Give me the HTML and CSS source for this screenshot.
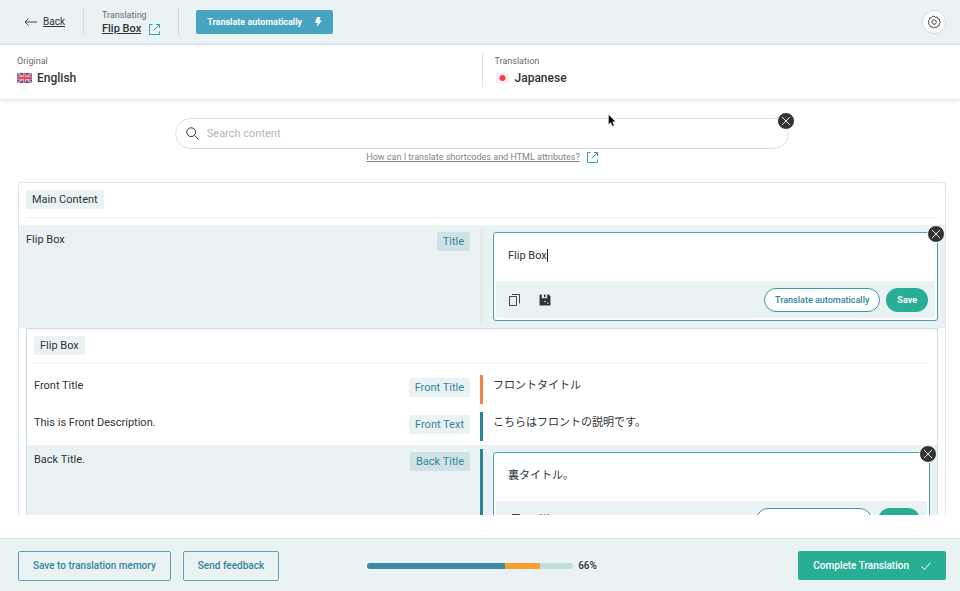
FILE: index.html
```html
<!DOCTYPE html>
<html lang="en">
<head>
<meta charset="utf-8">
<title>Translation Editor</title>
<link rel="stylesheet" href="styles.css">
</head>
<body>
<svg class="defs" aria-hidden="true">
  <symbol id="i-external" viewBox="0 0 11 11"><path d="M3.500 .5H.5V10.500H10.500V7.500M7 .5H10.500V4M10.300 .7L5 6" fill="none" stroke="currentColor"/></symbol>
  <symbol id="i-close" viewBox="0 0 10 10"><path d="M1 1L9 9M9 1L1 9" fill="none" stroke="currentColor" stroke-width=".9"/></symbol>
  <symbol id="i-copy" viewBox="0 0 12 12"><path d="M.5 2.500H7.500V11.500H.5ZM3 .5H10.500V9.500" fill="none" stroke="currentColor" stroke-width=".9"/></symbol>
  <symbol id="i-disk" viewBox="0 0 11 11"><path d="M1 .5H2.500V4H7.500V.5H9L10.500 2V10.500H.5V1Z" fill="currentColor"/><path d="M4.500 .5H6V3H4.500Z" fill="currentColor"/><path d="M4.800 7H6.300M8 7.500V9" stroke="#eaf2f4" stroke-width=".9" fill="none"/></symbol>
</svg>

<header class="topbar">
  <a class="back" href="#"><svg class="arrow" viewBox="0 0 13 8"><path d="M13 4H1M4.500 .5L1 4L4.500 7.500" fill="none" stroke="currentColor" stroke-width=".9"/></svg><span>Back</span></a>
  <div class="job">
    <span class="caption">Translating</span>
    <a class="job-link" href="#"><span>Flip Box</span><svg class="ext"><use href="#i-external"/></svg></a>
  </div>
  <button class="btn-auto" type="button">Translate automatically<svg class="bolt" viewBox="0 0 8 10"><path d="M3 0H6.500L5.300 3.500H7.800L2.800 10L3.700 5.800H1Z" fill="currentColor"/></svg></button>
  <button class="gear" type="button" aria-label="Settings"><svg viewBox="0 0 14 14"><path d="M7 1.2L8.500 2.300L10.300 2L11 3.600L12.700 4.400L12.400 6.100L13.300 7.500L12.200 8.900L12.200 10.600L10.500 11.100L9.600 12.600L7.900 12.200L6.400 13L5.100 11.800L3.300 11.800L2.900 10.100L1.500 9.100L2 7.400L1.200 5.900L2.500 4.700L2.700 3L4.400 2.700L5.500 1.300Z" fill="none" stroke="currentColor" stroke-width=".9"/><circle cx="7.100" cy="7.100" r="2.200" fill="none" stroke="currentColor" stroke-width=".9"/></svg></button>
</header>

<section class="languages">
  <div class="language">
    <span class="caption">Original</span>
    <strong><svg class="flag" viewBox="0 0 15 10"><path d="M0 0H15V10H0Z" fill="#3f559f"/><path d="M0 0L15 10M15 0L0 10" stroke="#f4eef2" stroke-width="1.800"/><path d="M0 0L15 10M15 0L0 10" stroke="#e0485c" stroke-width=".9"/><path d="M7.500 0V10M0 5H15" stroke="#f4dfe6" stroke-width="2.800"/><path d="M7.500 0V10M0 5H15" stroke="#f0465a" stroke-width="1.800"/></svg>English</strong>
  </div>
  <div class="language target">
    <span class="caption">Translation</span>
    <strong><svg class="flag" viewBox="0 0 15 10"><path d="M1 0H14V10H1Z" fill="#f1f0f1"/><circle cx="7.500" cy="5" r="3" fill="#fb3b4b"/></svg>Japanese</strong>
  </div>
</section>

<main class="content">
  <div class="search-area">
    <div class="search">
      <svg class="lens" viewBox="0 0 13 13"><circle cx="5.200" cy="5.200" r="4.400" fill="none" stroke="currentColor"/><path d="M8.400 8.400L12.500 12.500" stroke="currentColor"/></svg>
      <input type="text" aria-label="Search content" placeholder="Search content">
      <button class="close" type="button" aria-label="Clear search"><svg><use href="#i-close"/></svg></button>
    </div>
    <a class="help" href="#"><span>How can I translate shortcodes and HTML attributes?</span><svg class="ext"><use href="#i-external"/></svg></a>
  </div>

  <div class="group">
    <div class="group-head"><h2 class="chip">Main Content</h2></div>
    <div class="row active">
      <div class="source"><span>Flip Box</span><label class="chip tag" for="t-title">Title</label></div>
      <div class="translation">
        <div class="editor">
          <button class="close" type="button" aria-label="Close editor"><svg><use href="#i-close"/></svg></button>
          <textarea class="field" id="t-title" rows="1">Flip Box</textarea>
          <i class="caret"></i>
          <div class="tools">
            <button class="tool" type="button" aria-label="Copy original"><svg><use href="#i-copy"/></svg></button>
            <button class="tool" type="button" aria-label="Translation memory"><svg><use href="#i-disk"/></svg></button>
            <button class="pill outline" type="button">Translate automatically</button>
            <button class="pill save" type="button">Save</button>
          </div>
        </div>
      </div>
    </div>

    <div class="group nested">
      <div class="group-head"><h2 class="chip">Flip Box</h2></div>
      <div class="row review">
        <div class="source"><span>Front Title</span><span class="chip tag">Front Title</span></div>
        <div class="translation"><span lang="ja">フロントタイトル</span></div>
      </div>
      <div class="row done">
        <div class="source"><span>This is Front Description.</span><span class="chip tag">Front Text</span></div>
        <div class="translation"><span lang="ja">こちらはフロントの説明です。</span></div>
      </div>
      <div class="row done active">
        <div class="source"><span>Back Title.</span><label class="chip tag" for="t-back">Back Title</label></div>
        <div class="translation">
          <div class="editor">
            <button class="close" type="button" aria-label="Close editor"><svg><use href="#i-close"/></svg></button>
            <textarea class="field" id="t-back" rows="1" lang="ja">裏タイトル。</textarea>
            <div class="tools">
              <button class="tool" type="button" aria-label="Copy original"><svg><use href="#i-copy"/></svg></button>
              <button class="tool" type="button" aria-label="Translation memory"><svg><use href="#i-disk"/></svg></button>
              <button class="pill outline" type="button">Translate automatically</button>
              <button class="pill save" type="button">Save</button>
            </div>
          </div>
        </div>
      </div>
    </div>
  </div>
</main>

<footer class="bottombar">
  <div class="actions">
    <button class="btn-outline" type="button">Save to translation memory</button>
    <button class="btn-outline" type="button">Send feedback</button>
  </div>
  <div class="progress">
    <div class="track"><span class="part translated" style="width:67%"></span><span class="part pending" style="width:17%"></span></div>
    <span>66%</span>
  </div>
  <button class="btn-complete" type="button">Complete Translation<svg viewBox="0 0 10 8"><path d="M.5 4.500L3.500 7.300L9.500 .7" fill="none" stroke="currentColor"/></svg></button>
</footer>

<svg class="pointer" viewBox="0 0 8 13" aria-hidden="true"><path d="M.5 .5V10.500L2.800 8.500L4.400 12.300L6.200 11.500L4.600 7.800H7.700Z" fill="#000" stroke="#fff" stroke-width=".4"/></svg>
</body>
</html>
```
FILE: styles.css
```css
* { box-sizing: border-box; }

body {
  margin: 0;
  height: 100vh;
  display: flex;
  flex-direction: column;
  background: #fff;
  color: #2f3437;
  font: 11px/16px Roboto, "Noto Sans CJK JP", sans-serif;
}

button {
  font: inherit;
  color: inherit;
  margin: 0;
  padding: 0;
  border: 0;
  background: none;
  display: flex;
  align-items: center;
  justify-content: center;
  white-space: nowrap;
}

a { color: inherit; }
svg { display: block; flex: none; }
.defs { position: absolute; width: 0; height: 0; }
.ext { width: 11px; height: 11px; color: #3f9bb5; }

.topbar {
  flex: none;
  display: flex;
  align-items: center;
  height: 45px;
  padding: 0 14px 0 24px;
  background: #eaf2f4;
  border-bottom: 1px solid #d5e6ec;
}

.back {
  display: flex;
  align-items: center;
  gap: 6px;
  padding-right: 18px;
  font-size: 10px;
  text-decoration: none;
}
.back span, .job-link span, .help span { text-decoration: underline; }
.arrow { width: 13px; height: 8px; }

.job {
  padding: 0 18px;
  border: solid #cfe0e5;
  border-width: 0 1px;
  font-size: 11px;
  line-height: 14px;
}
.caption { display: block; color: #666c6f; font-size: 9px; }
.job-link {
  display: flex;
  align-items: center;
  gap: 8px;
  font-weight: 500;
  text-decoration: none;
}

.btn-auto {
  height: 24px;
  margin-left: 17px;
  padding: 0 11px;
  gap: 12px;
  border-radius: 2px;
  background: #46a4c1;
  color: #fff;
  font-size: 9px;
  font-weight: 700;
}
.bolt { width: 8px; height: 10px; }

.gear {
  width: 24px;
  height: 24px;
  margin-left: auto;
  border: 1px solid #c9dfe5;
  border-radius: 50%;
  background: #fff;
}
.gear svg { width: 14px; height: 14px; }

.languages {
  flex: none;
  display: grid;
  grid-template-columns: 1fr 1fr;
  padding: 8px 14px 12px 17px;
  box-shadow: 0 1px 4px #00000024;
}
.language { line-height: 16px; }
.language strong {
  display: flex;
  align-items: center;
  gap: 5px;
  height: 18px;
  font-size: 12px;
  font-weight: 500;
}
.target { padding-left: 12px; border-left: 1px solid #d9e4e8; }
.flag { width: 15px; height: 10px; }

.content {
  flex: 1;
  min-height: 0;
  overflow: hidden;
  margin-bottom: 23px;
  padding: 19px 14px 0 18px;
}

.search-area {
  width: 66%;
  margin: 0 auto 17px;
}
.search {
  position: relative;
  display: flex;
  align-items: center;
  gap: 8px;
  height: 31px;
  margin: 0 -1px;
  padding: 0 10px;
  border: 1px solid #dedfe0;
  border-radius: 16px;
}
.lens { width: 13px; height: 13px; }
.search input {
  flex: 1;
  min-width: 0;
  padding: 0;
  border: 0;
  outline: 0;
  background: none;
  font: inherit;
}
.search input::placeholder { color: #b3b5b6; opacity: 1; }
.help {
  display: flex;
  align-items: center;
  justify-content: center;
  gap: 7px;
  color: #808486;
  font-size: 9px;
  text-decoration: none;
}

.close {
  position: absolute;
  top: -8px;
  right: -8px;
  width: 18px;
  height: 18px;
  border: 1px solid #fff;
  border-radius: 50%;
  background: #333;
  color: #fff;
}
.close svg { width: 10px; height: 10px; }
.search .close { top: -7px; right: -7px; }

.group { border: 1px solid #e2e5e6; border-radius: 3px; }
.nested { margin: 0 7px; border-color: #c4e0e4; border-radius: 0; }
.group-head {
  display: flex;
  margin: 0 7px 7px;
  padding: 7px 0 8px;
  border-bottom: 1px solid #efefef;
}
.chip {
  margin: 0;
  padding: 0 6px;
  border-radius: 2px;
  background: #eaf2f4;
  font-size: 11px;
  font-weight: 400;
  line-height: 19px;
  white-space: nowrap;
}
.tag { color: #32859a; }

.row {
  display: grid;
  grid-template-columns: 1fr 1fr;
  padding: 4px 7px;
}
.active { background: #eaf2f4; }
.active .tag { background: #cfe3e7; }
.source {
  display: flex;
  align-items: flex-start;
  justify-content: space-between;
  gap: 12px;
  padding: 3px 12px 0 0;
}
.translation {
  min-height: 29px;
  margin-left: -2px;
  padding: 3px 0 3px 10px;
  border-left: 3px solid #e6e9ea;
}
.review .translation { border-color: #f58345; }
.done .translation { border-color: #2f8294; }

.editor {
  position: relative;
  padding: 2px;
  border: 1px solid #4b9db3;
  border-radius: 3px;
  background: #fff;
}
.field {
  display: block;
  width: 100%;
  height: 46px;
  padding: 12px;
  border: 0;
  outline: 0;
  resize: none;
  overflow: hidden;
  background: none;
  color: inherit;
  font: inherit;
  line-height: 18px;
}
.caret {
  position: absolute;
  left: 53px;
  top: 16px;
  width: 1px;
  height: 13px;
  background: #222;
}
.tools {
  display: flex;
  align-items: center;
  gap: 6px;
  height: 37px;
  padding: 0 7px 0 13px;
  border-radius: 2px;
  background: #eaf2f4;
}
.tool { margin-right: 12px; }
.tool svg { width: 12px; height: 12px; }
.pill {
  height: 24px;
  padding: 0 11px;
  border-radius: 12px;
  font-size: 9px;
  font-weight: 500;
}
.outline {
  margin-left: auto;
  padding: 0 10px;
  border: 1px solid #3f93a8;
  background: #fff;
  color: #32859a;
}
.save { background: #28ae95; color: #fff; font-weight: 700; }

.bottombar {
  flex: none;
  display: grid;
  grid-template-columns: 1fr auto 1fr;
  align-items: center;
  height: 53px;
  padding: 1px 14px 0 18px;
  background: #eaf2f4;
  border-top: 1px solid #d9e6ea;
  font-size: 10px;
  font-weight: 500;
}
.actions { display: flex; gap: 12px; }
.btn-outline {
  height: 30px;
  padding: 0 14px;
  border: 1px solid #5aa5b8;
  border-radius: 2px;
  color: #32859a;
}
.progress { display: flex; align-items: center; gap: 5px; }
.track {
  display: flex;
  width: 206px;
  height: 6px;
  overflow: hidden;
  border-radius: 3px;
  background: #bfe0d8;
}
.translated { background: #3f8ba1; }
.pending { background: #f8a02e; }
.btn-complete {
  justify-self: end;
  height: 29px;
  padding: 0 15px;
  gap: 12px;
  border-radius: 2px;
  background: #28ae95;
  color: #fff;
}
.btn-complete svg { width: 10px; height: 8px; }

.pointer {
  position: absolute;
  left: 608px;
  top: 114px;
  width: 8px;
  height: 13px;
}
```
